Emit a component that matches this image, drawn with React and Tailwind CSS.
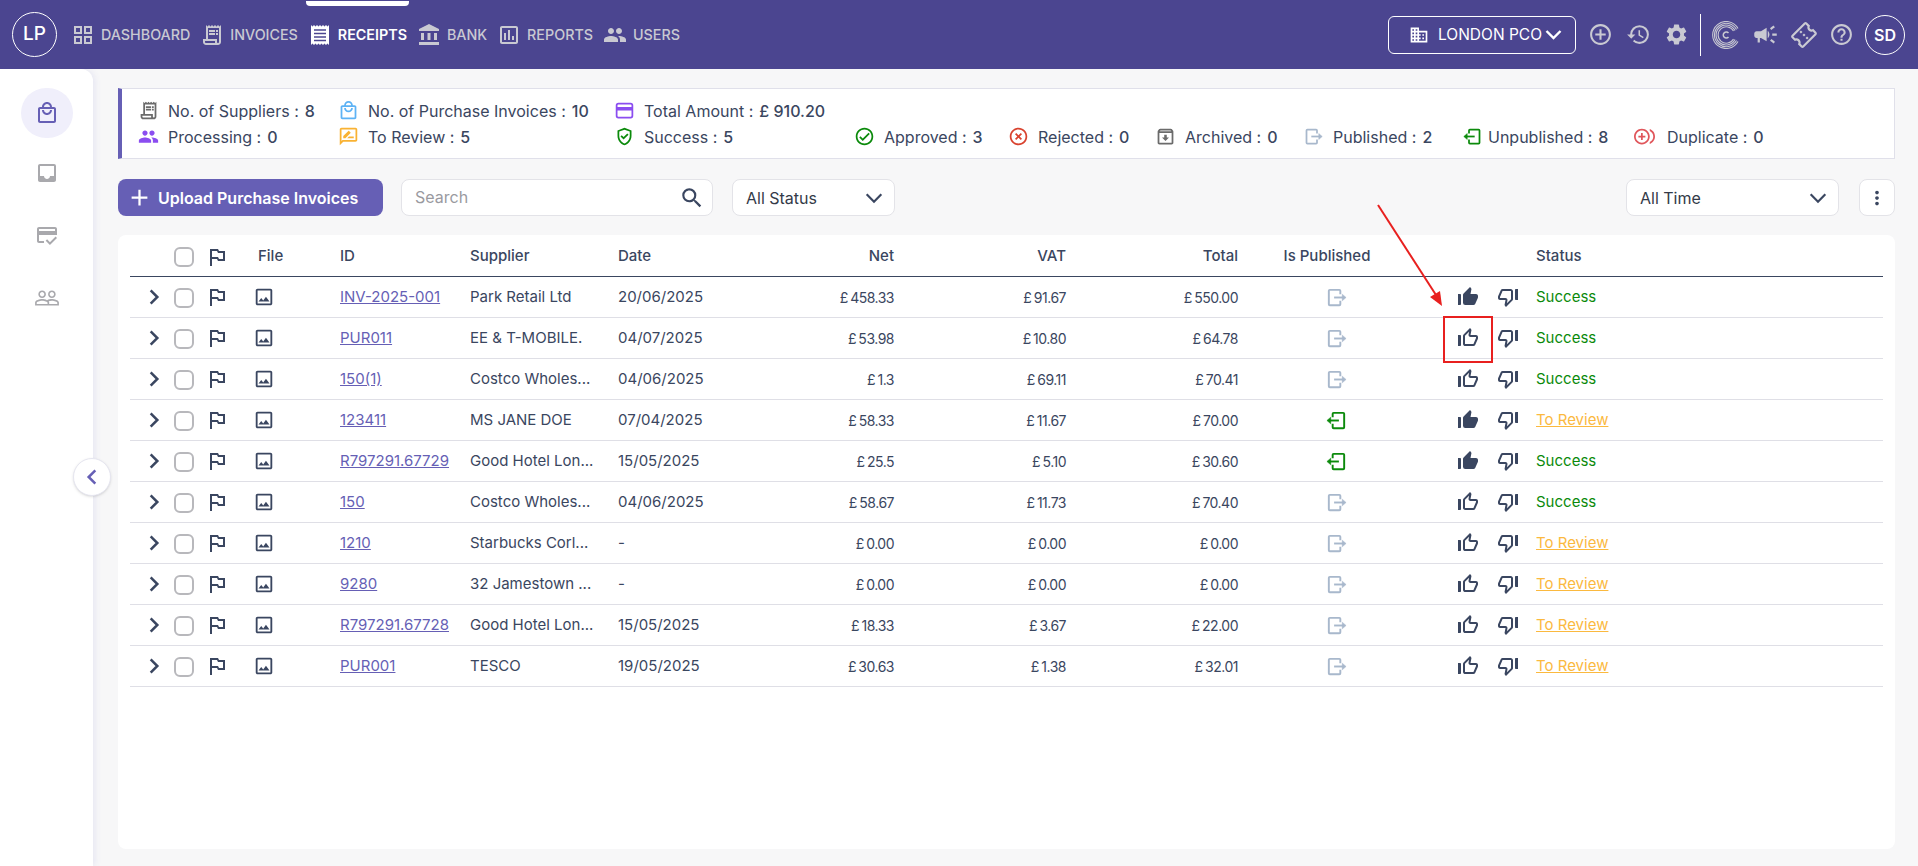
import React from "react";
import {
  MdOutlineGridView, MdOutlineReceiptLong, MdAccountBalance, MdOutlineAssessment, MdPeople, MdDomain,
  MdAddCircleOutline, MdHistory, MdSettings, MdCampaign, MdOutlineConfirmationNumber, MdHelpOutline,
  MdOutlineLocalMall, MdInbox, MdOutlineCreditScore,
  MdPeopleOutline, MdOutlineRateReview, MdOutlineGppGood, MdOutlineCheckCircle, MdOutlineHighlightOff,
  MdOutlineArchive, MdOutlineControlPointDuplicate, MdAdd, MdSearch, MdMoreVert,
  MdOutlinedFlag, MdOutlineImage, MdThumbUpAlt, MdThumbUpOffAlt, MdThumbDownOffAlt,
} from "react-icons/md";

function ReceiptIcon({ size = 24 }) {
  return (
    <svg width={size} height={size} viewBox="0 0 24 24">
      <path d="M3 2l1.5 1.5L6 2l1.5 1.5L9 2l1.5 1.5L12 2l1.5 1.5L15 2l1.5 1.5L18 2l1.5 1.5L21 2v20l-1.5-1.5L18 22l-1.5-1.5L15 22l-1.5-1.5L12 22l-1.5-1.5L9 22l-1.5-1.5L6 22l-1.5-1.5L3 22z" fill="#fff" />
      <path d="M6 7h12M6 10.5h12M6 14h12M6 17.5h12" stroke="#4b4590" strokeWidth="1.7" />
    </svg>
  );
}

function PublishIcon({ size = 23, className = "" }) {
  return (
    <svg width={size} height={size} viewBox="0 0 24 24" fill="none" stroke="currentColor" className={className}>
      <path d="M16 8.5V5a1 1 0 0 0-1-1H5a1 1 0 0 0-1 1v14a1 1 0 0 0 1 1h10a1 1 0 0 0 1-1v-3.5" strokeWidth="2" />
      <path d="M9.5 12H19" strokeWidth="2" />
      <path d="M18 8.5l4 3.5-4 3.5z" fill="currentColor" strokeWidth="0.5" />
    </svg>
  );
}

function CardIcon({ size = 21, className = "" }) {
  return (
    <svg width={size} height={size} viewBox="0 0 24 24" className={className} fill="none" stroke="currentColor">
      <rect x="3" y="4" width="18" height="16" rx="2" strokeWidth="2" />
      <rect x="3" y="8" width="18" height="4" fill="currentColor" strokeWidth="0" />
    </svg>
  );
}

function Chevron({ points, size = 24, width = 2.4, className = "" }) {
  return (
    <svg width={size} height={size} viewBox="0 0 24 24" fill="none" stroke="currentColor" strokeWidth={width} className={className}>
      <polyline points={points} />
    </svg>
  );
}

const NAV = [
  { l: "DASHBOARD", I: MdOutlineGridView },
  { l: "INVOICES", I: MdOutlineReceiptLong },
  { l: "RECEIPTS", I: ReceiptIcon, on: true },
  { l: "BANK", I: MdAccountBalance },
  { l: "REPORTS", I: MdOutlineAssessment },
  { l: "USERS", I: MdPeople },
];

const ROWS = [
  ["INV-2025-001", "Park Retail Ltd", "20/06/2025", "£ 458.33", "£ 91.67", "£ 550.00", 0, 1, "Success"],
  ["PUR011", "EE & T-MOBILE.", "04/07/2025", "£ 53.98", "£ 10.80", "£ 64.78", 0, 0, "Success"],
  ["150(1)", "Costco Wholes...", "04/06/2025", "£ 1.3", "£ 69.11", "£ 70.41", 0, 0, "Success"],
  ["123411", "MS JANE DOE", "07/04/2025", "£ 58.33", "£ 11.67", "£ 70.00", 1, 1, "To Review"],
  ["R797291.67729", "Good Hotel Lon...", "15/05/2025", "£ 25.5", "£ 5.10", "£ 30.60", 1, 1, "Success"],
  ["150", "Costco Wholes...", "04/06/2025", "£ 58.67", "£ 11.73", "£ 70.40", 0, 0, "Success"],
  ["1210", "Starbucks Corl...", "-", "£ 0.00", "£ 0.00", "£ 0.00", 0, 0, "To Review"],
  ["9280", "32 Jamestown ...", "-", "£ 0.00", "£ 0.00", "£ 0.00", 0, 0, "To Review"],
  ["R797291.67728", "Good Hotel Lon...", "15/05/2025", "£ 18.33", "£ 3.67", "£ 22.00", 0, 0, "To Review"],
  ["PUR001", "TESCO", "19/05/2025", "£ 30.63", "£ 1.38", "£ 32.01", 0, 0, "To Review"],
];

const GRID = "grid grid-cols-[44px_37px_47px_82px_130px_148px_90px_186px_172px_172px_178px_80px_40px_1fr] items-center";

function Stat({ I, c, label, value, className = "", iw = "w-[30px]" }) {
  return (
    <div className={`flex items-center ${className}`}>
      <span className={`${iw} shrink-0 flex`}><I size={21} className={c} /></span>
      <span>{label} : </span>
      <span className="ml-[6px] font-medium">{value}</span>
    </div>
  );
}

function CLogo() {
  return (
    <svg width="28" height="28" viewBox="0 0 28 28" fill="none" stroke="#c9c9d2">
      <path d="M26 20.5a13.5 13.5 0 1 1 0-13" strokeWidth="1.1" />
      <path d="M24.5 19.5a11.7 11.7 0 1 1 0-11" strokeWidth="1.1" />
      <path d="M23 18.5a10 10 0 1 1 0-9" strokeWidth="1.1" />
      <path d="M21.5 18a8.2 8.2 0 1 1 0-8" strokeWidth="1.1" />
      <path d="M16.5 12a3 3 0 1 0 0 4" strokeWidth="1.5" />
    </svg>
  );
}

const DOWN = "4,8 12,16 20,8";

export default function App() {
  return (
    <div className="w-[1918px] h-[866px] overflow-hidden bg-[#f7f7f8] text-[#3a4660] text-[15px] relative flex flex-col" style={{ fontFamily: '"Inter","Noto Sans",sans-serif' }}>
      <header className="h-[69px] shrink-0 bg-[#4b4590] flex items-center pl-[12px] pr-[13px] relative">
        <div className="w-[45px] h-[45px] rounded-full border border-white text-white flex items-center justify-center text-[19px] font-medium">LP</div>
        <nav className="flex items-center ml-[14px] gap-[10px]">
          {NAV.map(({ l, I, on }) => (
            <div key={l} className={`flex items-center gap-[6px] text-[14.3px] relative ${on ? "text-white font-semibold" : "text-[#c9c9d2] font-medium"}`}>
              <I size={24} />
              <span>{l}</span>
              {on && <span className="absolute left-[-2px] right-[-2px] top-[-22px] h-[5px] bg-white rounded-b" />}
            </div>
          ))}
        </nav>
        <div className="ml-auto flex items-center">
          <div className="w-[188px] h-[38px] border border-white rounded-md flex items-center text-white text-[15.5px] pl-[20px] mr-[12px]">
            <MdDomain size={20} className="mr-[9px]" />
            <span>LONDON PCO</span>
            <Chevron points={DOWN} size={21} width={2.8} className="ml-[1px]" />
          </div>
          <div className="flex items-center gap-[13px] text-[#c9c9d2]">
            <MdAddCircleOutline size={25} />
            <MdHistory size={25} />
            <MdSettings size={25} />
          </div>
          <div className="w-px h-[42px] bg-white mx-[11px]" />
          <div className="flex items-center gap-[12px] text-[#c9c9d2]">
            <CLogo />
            <MdCampaign size={27} />
            <MdOutlineConfirmationNumber size={26} className="-rotate-45" />
            <MdHelpOutline size={25} />
          </div>
          <div className="w-[40px] h-[40px] rounded-full border border-white text-white flex items-center justify-center text-[16px] font-semibold ml-[11px]">SD</div>
        </div>
      </header>

      <div className="flex-1 flex min-h-0">
        <aside className="w-[93px] shrink-0 bg-white rounded-tr-xl shadow-[2px_0_6px_#e6e6f2] flex flex-col items-center pt-[19px] text-[#a9a9ad]">
          <div className="w-[52px] h-[50px] rounded-full bg-[#f0effb] flex items-center justify-center text-[#665fb5]"><MdOutlineLocalMall size={24} /></div>
          <div className="mt-[10px] h-[50px] flex items-center"><MdInbox size={24} /></div>
          <div className="mt-[12px] h-[50px] flex items-center"><MdOutlineCreditScore size={24} /></div>
          <div className="mt-[13px] h-[50px] flex items-center"><MdPeopleOutline size={26} /></div>
        </aside>

        <main className="flex-1 pl-[25px] pr-[23px] pt-[19px] pb-[17px] flex flex-col min-w-0">
          <section className="h-[71px] shrink-0 bg-white border border-[#e0e0ea] border-l-[4px] border-l-[#665fb5] pl-[16px] flex flex-col justify-center gap-[6px] text-[16px]">
            <div className="flex h-[20px]">
              <Stat I={MdOutlineReceiptLong} c="text-[#6b6b6b]" label="No. of Suppliers" value="8" className="w-[200px]" />
              <Stat I={MdOutlineLocalMall} c="text-[#5eb3f5]" label="No. of Purchase Invoices" value="10" className="w-[276px]" />
              <Stat I={CardIcon} c="text-[#8b4df0]" label="Total Amount" value="£ 910.20" />
            </div>
            <div className="flex h-[20px]">
              <Stat I={MdPeople} c="text-[#8b4df0]" label="Processing" value="0" className="w-[200px]" />
              <Stat I={MdOutlineRateReview} c="text-[#f9b233]" label="To Review" value="5" className="w-[276px]" />
              <Stat I={MdOutlineGppGood} c="text-[#0b8a0b]" label="Success" value="5" className="w-[240px]" />
              <Stat I={MdOutlineCheckCircle} c="text-[#0b8a0b]" label="Approved" value="3" className="w-[154px]" />
              <Stat I={MdOutlineHighlightOff} c="text-[#d9432f]" label="Rejected" value="0" className="w-[147px]" />
              <Stat I={MdOutlineArchive} c="text-[#6b6b6b]" label="Archived" value="0" className="w-[148px]" />
              <Stat I={PublishIcon} c="text-[#a8b8cc]" label="Published" value="2" className="w-[159px]" />
              <Stat I={PublishIcon} c="text-[#0b8a0b] -scale-x-100" label="Unpublished" value="8" iw="w-[26px]" className="w-[172px]" />
              <Stat I={MdOutlineControlPointDuplicate} c="text-[#e0565b] -scale-x-100" label="Duplicate" value="0" iw="w-[33px]" />
            </div>
          </section>

          <section className="h-[37px] shrink-0 mt-[20px] flex items-center text-[16px]">
            <button className="w-[265px] h-[37px] bg-[#665fb5] rounded-lg text-white font-semibold flex items-center pl-[8px] gap-[5px] text-[16px] whitespace-nowrap"><MdAdd size={27} />Upload Purchase Invoices</button>
            <div className="w-[312px] h-[37px] ml-[18px] bg-white border border-[#e3e3e8] rounded-lg flex items-center justify-between pl-[13px] pr-[7px] text-[#9a9a9f]"><span className="-mt-[2px]">Search</span><MdSearch size={26} className="text-[#3a4660]" /></div>
            <div className="w-[163px] h-[37px] ml-[19px] bg-white border border-[#e3e3e8] rounded-lg flex items-center justify-between pl-[13px] pr-[9px] text-[#333a48]"><span>All Status</span><Chevron points={DOWN} size={22} className="text-[#3a4660]" /></div>
            <div className="w-[213px] h-[37px] ml-auto bg-white border border-[#e3e3e8] rounded-lg flex items-center justify-between pl-[13px] pr-[9px] text-[#333a48]"><span>All Time</span><Chevron points={DOWN} size={22} className="text-[#3a4660]" /></div>
            <div className="w-[36px] h-[37px] ml-[20px] bg-white border border-[#e3e3e8] rounded-lg flex items-center justify-center"><MdMoreVert size={22} className="text-[#3a4660]" /></div>
          </section>

          <section className="flex-1 mt-[19px] bg-white rounded-lg px-[12px] relative">
            <div className={`${GRID} h-[42px] pt-[2px] border-b-[1.5px] border-[#3a4660] font-medium`}>
              <span />
              <span className="w-[20px] h-[20px] rounded-md border-2 border-[#b8b8bc]" />
              <MdOutlinedFlag size={24} className="-ml-[6px]" />
              <span>File</span>
              <span>ID</span>
              <span>Supplier</span>
              <span>Date</span>
              <span className="text-right">Net</span>
              <span className="text-right">VAT</span>
              <span className="text-right">Total</span>
              <span className="text-center">Is Published</span>
              <span />
              <span />
              <span>Status</span>
            </div>
            {ROWS.map((r) => (
              <div key={r[0]} className={`${GRID} h-[41px] border-b border-[#dfdfe6]`}>
                <Chevron points="8,4 16,12 8,20" size={20} width={3} className="ml-[14px]" />
                <span className="w-[20px] h-[20px] rounded-md border-2 border-[#b8b8bc] mt-[2px]" />
                <MdOutlinedFlag size={24} className="-ml-[6px]" />
                <MdOutlineImage size={22} className="-ml-[5px] text-[#3a4660]" />
                <a className="underline text-[#665fb5]">{r[0]}</a>
                <span className="truncate">{r[1]}</span>
                <span>{r[2]}</span>
                <span className="text-right text-[14px] tracking-[-0.5px] [word-spacing:-1px]">{r[3]}</span>
                <span className="text-right text-[14px] tracking-[-0.5px] [word-spacing:-1px]">{r[4]}</span>
                <span className="text-right text-[14px] tracking-[-0.5px] [word-spacing:-1px]">{r[5]}</span>
                <span className="flex justify-center pl-[18px]">
                  {r[6] ? <PublishIcon size={23} className="text-[#0b8a0b] -scale-x-100" /> : <PublishIcon size={23} className="text-[#a8b8cc]" />}
                </span>
                <span className="flex pl-[40px]">{r[7] ? <MdThumbUpAlt size={24} /> : <MdThumbUpOffAlt size={24} />}</span>
                <span className="flex"><MdThumbDownOffAlt size={24} /></span>
                <span className={r[8] === "Success" ? "text-[#0b8a0b]" : "text-[#fbb93f] underline"}>{r[8]}</span>
              </div>
            ))}
            <div className="absolute left-[1325px] top-[81px] w-[50px] h-[47px] border-2 border-[#e8201f]" />
            <svg className="absolute left-[1255px] top-[-35px]" width="80" height="115" viewBox="0 0 80 115">
              <line x1="5" y1="5" x2="63" y2="95" stroke="#e8201f" strokeWidth="2" />
              <polygon points="69,106 57,97 67,91" fill="#e8201f" />
            </svg>
          </section>
        </main>
      </div>

      <button className="absolute left-[73px] top-[458px] w-[38px] h-[38px] rounded-full bg-white border border-[#e6e6f0] shadow-sm flex items-center justify-center text-[#665fb5]"><Chevron points="16,4 8,12 16,20" size={20} width={3} /></button>
    </div>
  );
}
